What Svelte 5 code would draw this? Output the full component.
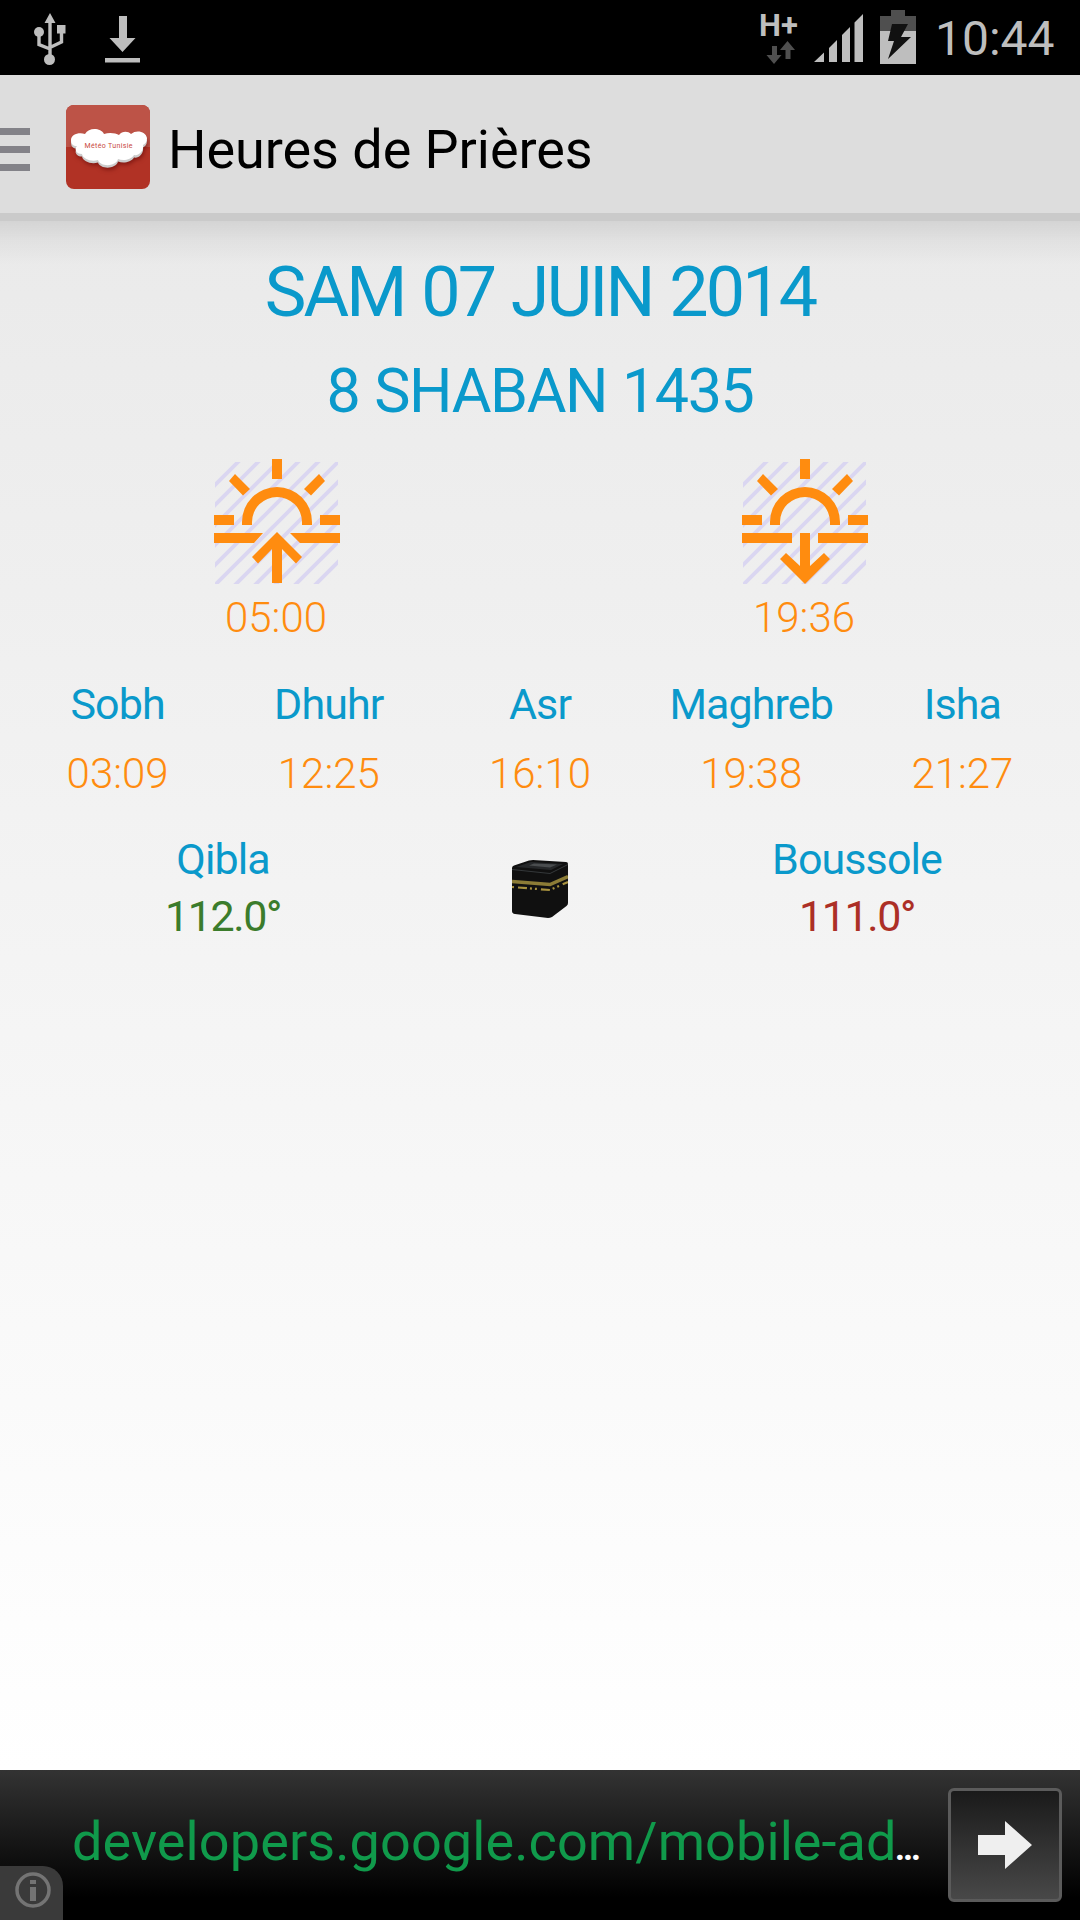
<script lang="ts">
	const prayers = [
		{ name: 'Sobh', time: '03:09' },
		{ name: 'Dhuhr', time: '12:25' },
		{ name: 'Asr', time: '16:10' },
		{ name: 'Maghreb', time: '19:38' },
		{ name: 'Isha', time: '21:27' }
	];

	const stripes = [27, 47, 67, 87, 107, 127, 147, 167, 187, 207, 227];

	const cloud =
		'M5 35c0-5 7-8 14-6 4-7 16-6 19 0 5-2 12-1 15 1 3-4 9-4 12-1 6-5 15-2 16 4 0 4-2 6-4 7 1 6-4 11-9 10-3 5-11 6-16 4-2 8-18 8-20 1-7 2-15-1-16-6-6 0-8-5-5-8-4 0-6-2-6-6z';
</script>

<div class="screen">
	<header class="status">
		<svg class="usb" width="32" height="53" viewBox="0 0 32 53">
			<g fill="none" stroke="#bebebe" stroke-width="3.4">
				<path d="M16 8v34M5 20v11.500L16 36M27.500 20v9L16 34.500" />
			</g>
			<g fill="#bebebe">
				<path d="M16 0l5.500 10h-11zM23 12h8.500v8.500H23z" />
				<circle cx="5" cy="19" r="5" />
				<circle cx="15.500" cy="46.500" r="5.500" />
			</g>
		</svg>
		<svg class="download" width="35" height="47" viewBox="0 0 35 47" fill="#bebebe">
			<path d="M14 0h8v22h8.500L17.500 36 4.500 22H14zM0 42h35v4.500H0z" />
		</svg>
		<div class="network">
			<span>H+</span>
			<svg width="30" height="23" viewBox="0 0 30 23" fill="#4f4f4f">
				<path d="M6 5h5v9h4.500L8 23 .5 14H6zM21.500 0L29 9h-4.500v9h-5V9H14z" />
			</svg>
		</div>
		<svg class="signal" width="49" height="48" viewBox="0 0 49 48" fill="#bebebe">
			<path d="M0 48L10 38.500V48zM15 34l8-8v22h-8zM28 21l8-8v35h-8zM40.500 8.500L49 0v48h-8.500z" />
		</svg>
		<svg class="battery" width="36" height="54" viewBox="0 0 36 54">
			<path d="M11 0h14v6h11v15H0V6h11z" fill="#4f4f4f" />
			<path d="M0 21h36v33H0z" fill="#bebebe" />
			<path d="M12 14h16l-7 13h10L8 49l6-18H8z" fill="#111" />
		</svg>
		<time>10:44</time>
	</header>

	<nav class="bar">
		<div class="burger"><i></i><i></i><i></i></div>
		<svg class="logo" width="84" height="84" viewBox="0 0 84 84">
			<rect width="84" height="84" rx="8" fill="#b13225" />
			<path d="M0 42V8a8 8 0 0 1 8-8h68a8 8 0 0 1 8 8v34z" fill="#bd5347" />
			<path class="shade" transform="translate(0 2.500)" d={cloud} />
			<path d={cloud} fill="#fff" />
			<text x="42.500" y="42.500" text-anchor="middle" textLength="48">Météo Tunisie</text>
		</svg>
		<h1>Heures de Prières</h1>
	</nav>

	<main>
		<h2 class="date">SAM 07 JUIN 2014</h2>
		<h3 class="hijri">8 SHABAN 1435</h3>

		<section class="sun">
			<div>
				{@render sun(true)}
				<span class="time">05:00</span>
			</div>
			<div>
				{@render sun(false)}
				<span class="time">19:36</span>
			</div>
		</section>

		<section class="prayers">
			{#each prayers as p}
				<div>
					<span class="label">{p.name}</span>
					<span class="time">{p.time}</span>
				</div>
			{/each}
		</section>

		<section class="compass">
			<div class="side">
				<span class="label">Qibla</span>
				<span class="angle green">112.0<b>°</b></span>
			</div>
			<svg class="kaaba" width="56" height="58" viewBox="0 0 56 58">
				<path d="M0 8Q0 6 2 5.500L17 .5Q19 0 21 0L54 2Q56 2 56 4V43Q56 45 54.500 46L40 57Q38 58 36 58L3 54Q0 53.500 0 51z" fill="#101010" />
				<path d="M4 7L19 2l32 2-12 6z" fill="#252729" />
				<path d="M17 5.500l5-2 23 1-7 3z" fill="#4a4d4f" />
				<path d="M0 9.500l38 4 18-9" fill="none" stroke="#34383a" />
				<path d="M0 21.500l38 3 18-8" fill="none" stroke="#8c7c36" stroke-width="3.500" />
				<path d="M0 27l38 3 18-8" fill="none" stroke="#a8923f" stroke-width="2.200" stroke-dasharray="2 4 9 3 2 3" />
			</svg>
			<div class="side">
				<span class="label">Boussole</span>
				<span class="angle red">111.0<b>°</b></span>
			</div>
		</section>
	</main>

	<footer class="ad">
		<p>developers.google.com/mobile-ad<span>…</span></p>
		<button aria-label="Open">
			<svg width="54" height="48" viewBox="0 0 54 48" fill="#efefef">
				<path d="M0 14h27V0l27 24-27 24V34H0z" />
			</svg>
		</button>
		<div class="info">
			<svg width="36" height="36" viewBox="0 0 36 36">
				<circle cx="18" cy="18" r="16" fill="none" stroke="#747474" stroke-width="3.500" />
				<path d="M15 8h6v4h-6zM15 15h6v14h-6z" fill="#747474" />
			</svg>
		</div>
	</footer>
</div>

{#snippet sun(rising: boolean)}
	<svg class="sunicon" width="126" height="126" viewBox="0 0 126 126">
		<svg x="1" y="3" width="123" height="122" viewBox="1 3 123 122">
			{#each stripes as c}
				<path d="M-5 {c + 5}L{c + 5} -5" stroke="#dad6f1" stroke-width="3.800" />
			{/each}
		</svg>
		<g fill="#ff8c0f">
			<path d="M58 0h10v20H58zM0 56h20v10H0zM106 56h20v10h-20zM21 15l15 15-7 6.500L15 22zM105 15L90 30l7 6.500L111 22z" />
			<path d="M28 66v-3a35 35 0 0 1 70 0v3H88v-3a25 25 0 0 0-50 0v3z" />
			{#if rising}
				<path d="M0 74h49l-9 10H0zM76 74h50v10H86z" />
				<path d="M63 73l25 25-6 6.500L68 90v34H58V90L44 104.500 38 98z" />
			{:else}
				<path d="M0 74h50v10H0zM76 74h50v10H76z" />
				<path d="M58 74h10v33l14-13 6 6-25 25-25-25 6-6 14 13z" />
			{/if}
		</g>
	</svg>
{/snippet}

<style>
	:global(body) {
		margin: 0;
	}

	.screen {
		width: 1080px;
		height: 1920px;
		display: flex;
		flex-direction: column;
		overflow: hidden;
		font-family: Roboto, sans-serif;
		background: #fff;
	}

	h1,
	h2,
	h3,
	p {
		margin: 0;
		font-weight: 400;
		white-space: nowrap;
	}

	svg {
		display: block;
		flex: none;
	}

	.status {
		height: 75px;
		flex: none;
		display: flex;
		align-items: flex-start;
		background: #000;
		color: #bebebe;
	}

	.usb {
		margin: 13px 0 0 34px;
	}

	.download {
		margin: 16px 0 0 39px;
	}

	.network {
		margin: 10px 0 0 619px;
		width: 40px;
		font-weight: 700;
		font-size: 31px;
		line-height: 31px;
	}

	.network span {
		display: block;
	}

	.network svg {
		margin-left: 7px;
	}

	.signal {
		margin: 14px 0 0 15px;
	}

	.battery {
		margin: 10px 0 0 17px;
	}

	.status time {
		margin-left: 19px;
		font-size: 48px;
		line-height: 77px;
	}

	.bar {
		height: 138px;
		flex: none;
		display: flex;
		align-items: center;
		background: #ddd;
		border-bottom: 8px solid #cacaca;
	}

	.burger {
		width: 30px;
		display: flex;
		flex-direction: column;
		gap: 11px;
		padding-top: 10px;
	}

	.burger i {
		height: 7px;
		background: #838288;
	}

	.logo {
		margin: 6px 0 0 36px;
	}

	.shade {
		fill: #ccc;
		filter: drop-shadow(1px 2px 2px #5008);
	}

	.logo text {
		font: 7px Roboto, sans-serif;
		fill: #c8493d;
	}

	h1 {
		margin: 12px 0 0 18px;
		font-size: 54px;
		line-height: 70px;
		letter-spacing: -0.05px;
	}

	main {
		flex: 1;
		padding: 26px 12px 0;
		background:
			linear-gradient(#00000018, #0000000a 20px, #0000 44px),
			linear-gradient(#eaeaea, #fff);
		color: #0a99cb;
		text-align: center;
	}

	.date {
		font-size: 70px;
		line-height: 90px;
		letter-spacing: -2.8px;
		word-spacing: 2px;
	}

	.hijri {
		margin-top: 12px;
		font-size: 61px;
		line-height: 84px;
		letter-spacing: -1.4px;
		word-spacing: 1px;
	}

	.sun,
	.prayers,
	.compass {
		display: flex;
	}

	.sun {
		margin-top: 26px;
	}

	.sun div,
	.prayers div {
		flex: 1;
		display: flex;
		flex-direction: column;
		align-items: center;
	}

	.sunicon {
		margin: 0 0 8px 2px;
	}

	.label,
	.time,
	.angle {
		display: block;
		font-size: 43px;
		line-height: 50px;
		letter-spacing: -0.9px;
	}

	.time {
		font-size: 42px;
		font-weight: 300;
		letter-spacing: 0;
		color: #ff8c0f;
	}

	.prayers {
		margin-top: 36px;
	}

	.prayers .time {
		margin-top: 20px;
	}

	.compass {
		margin-top: 35px;
		align-items: center;
		justify-content: space-between;
	}

	.kaaba {
		margin-top: 3px;
	}

	.side {
		width: 422px;
	}

	.angle {
		margin-top: 7px;
		letter-spacing: -1.4px;
	}

	.angle b {
		font-weight: 500;
	}

	.green {
		color: #3b7c2c;
	}

	.red {
		color: #ac2f26;
	}

	.ad {
		position: relative;
		height: 150px;
		flex: none;
		display: flex;
		align-items: center;
		justify-content: space-between;
		box-sizing: border-box;
		padding: 0 18px 0 72px;
		background: linear-gradient(#333, #000 85%);
	}

	.ad p {
		font-size: 54px;
		line-height: 70px;
		letter-spacing: 0.1px;
		color: #109a4b;
	}

	.ad p span {
		margin-left: -2px;
		font-size: 35px;
		font-weight: 700;
		color: #fff;
	}

	.ad button {
		width: 114px;
		height: 114px;
		padding: 0;
		display: grid;
		place-items: center;
		border: 3px solid #5b5b5b;
		border-radius: 6px;
		background: linear-gradient(#1a1a1a, #484848);
	}

	.info {
		position: absolute;
		left: 0;
		bottom: 0;
		width: 63px;
		height: 54px;
		box-sizing: border-box;
		padding: 6px 0 0 15px;
		border-top-right-radius: 20px;
		background: #3a3a3a;
	}
</style>
